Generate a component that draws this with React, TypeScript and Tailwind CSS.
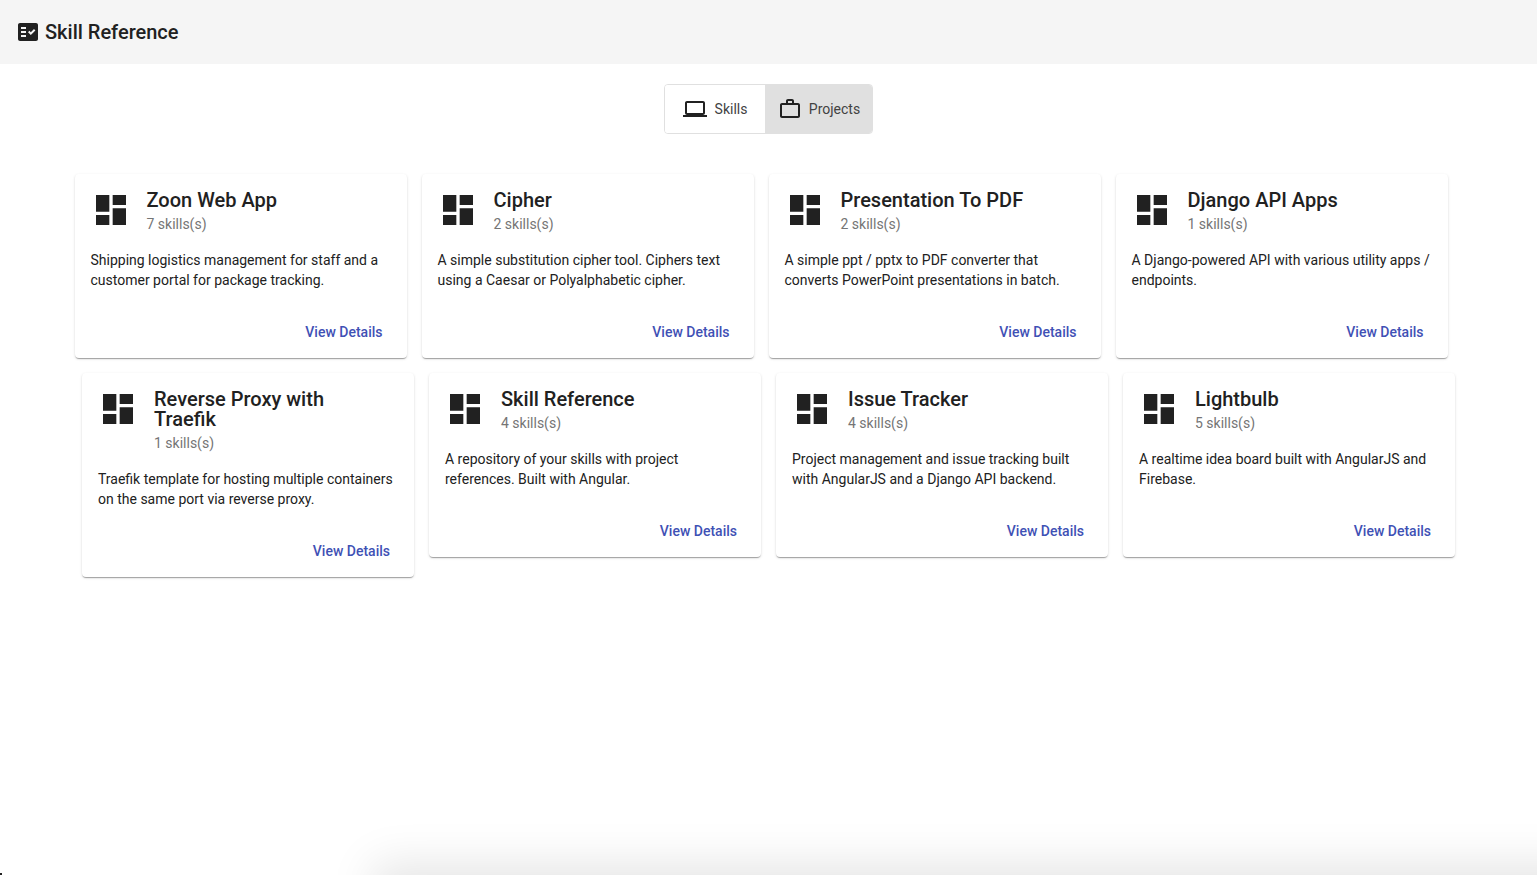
const projects = [
  [
    { name: "Zoon Web App", skills: 7, text: "Shipping logistics management for staff and a customer portal for package tracking." },
    { name: "Cipher", skills: 2, text: "A simple substitution cipher tool. Ciphers text using a Caesar or Polyalphabetic cipher." },
    { name: "Presentation To PDF", skills: 2, text: "A simple ppt / pptx to PDF converter that converts PowerPoint presentations in batch." },
    { name: "Django API Apps", skills: 1, text: "A Django-powered API with various utility apps / endpoints." },
  ],
  [
    { name: "Reverse Proxy with Traefik", skills: 1, text: "Traefik template for hosting multiple containers on the same port via reverse proxy." },
    { name: "Skill Reference", skills: 4, text: "A repository of your skills with project references. Built with Angular." },
    { name: "Issue Tracker", skills: 4, text: "Project management and issue tracking built with AngularJS and a Django API backend." },
    { name: "Lightbulb", skills: 5, text: "A realtime idea board built with AngularJS and Firebase." },
  ],
];

type Project = (typeof projects)[number][number];

function ProjectCard({ project }: { project: Project }) {
  return (
    <div className="w-[332px] shrink-0 rounded bg-white px-4 pt-4 pb-2 shadow-[0_2px_1px_-1px_rgba(0,0,0,0.2),0_1px_1px_0_rgba(0,0,0,0.14),0_1px_3px_0_rgba(0,0,0,0.12)]">
      <div className="flex">
        <svg viewBox="0 0 24 24" className="h-10 w-10 shrink-0 fill-[#212121]">
          <path d="M3 13h8V3H3v10zm0 8h8v-6H3v6zm10 0h8V11h-8v10zm0-18v6h8V3h-8z" />
        </svg>
        <div className="ml-4 min-w-0 flex-1">
          <div className="pr-8 text-[20px] leading-5 font-medium text-[#212121]">{project.name}</div>
          <div className="mt-[4px] text-sm leading-5 text-[#757575]">{project.skills} skills(s)</div>
        </div>
      </div>
      <p className="mt-[16px] text-sm leading-5 text-[#212121]">{project.text}</p>
      <div className="mt-[24px] flex justify-end">
        <button className="px-2 text-sm leading-9 font-medium text-[#3f51b5]">View Details</button>
      </div>
    </div>
  );
}

export default function App() {
  return (
    <div className="relative h-[875px] overflow-hidden bg-white font-['Roboto',sans-serif]">
      <header className="flex h-16 items-center bg-[#f5f5f5] px-4">
        <svg viewBox="0 0 24 24" className="h-6 w-6 fill-[#212121]">
          <path d="M20,3H4C2.9,3,2,3.9,2,5v14c0,1.1,0.9,2,2,2h16c1.1,0,2-0.9,2-2V5C22,3.9,21.1,3,20,3z M10,17H5v-2h5V17z M10,13H5v-2h5V13z M10,9H5V7h5V9z M14.82,15L12,12.16l1.41-1.41l1.41,1.42L17.99,9l1.42,1.42L14.82,15z" />
        </svg>
        <span className="ml-[5px] text-[20px] font-medium text-[#212121]">Skill Reference</span>
      </header>

      <div className="mt-5 flex justify-center">
        <div className="flex h-[50px] overflow-hidden rounded border border-[#e0e0e0] text-sm text-[#424242]">
          <button className="flex w-[101px] items-center justify-center border-r border-[#e0e0e0] bg-white">
            <svg viewBox="0 0 24 24" className="h-6 w-6 fill-[#212121]">
              <path d="M20 18c1.1 0 1.99-.9 1.99-2L22 6c0-1.1-.9-2-2-2H4c-1.1 0-2 .9-2 2v10c0 1.1.9 2 2 2H0v2h24v-2h-4zM4 6h16v10H4V6z" />
            </svg>
            <span className="ml-2">Skills</span>
          </button>
          <button className="flex w-[106px] items-center justify-center bg-[#e0e0e0]">
            <svg viewBox="0 0 24 24" className="h-6 w-6 fill-[#212121]">
              <path d="M14 6V4h-4v2h4zM4 8v11h16V8H4zm16-2c1.11 0 2 .89 2 2v11c0 1.11-.89 2-2 2H4c-1.11 0-2-.89-2-2l.01-11c0-1.11.88-2 1.99-2h4V4c0-1.11.89-2 2-2h4c1.11 0 2 .89 2 2v2h4z" />
            </svg>
            <span className="ml-[7px]">Projects</span>
          </button>
        </div>
      </div>

      <div className="mt-10 flex flex-col gap-[15px]">
        <div className="flex items-start justify-center gap-[15px] pr-[15px]">
          {projects[0].map((project) => (
            <ProjectCard key={project.name} project={project} />
          ))}
        </div>
        <div className="flex items-start justify-center gap-[15px]">
          {projects[1].map((project) => (
            <ProjectCard key={project.name} project={project} />
          ))}
        </div>
      </div>

      {/* soft shadow rising from the bottom edge */}
      <div className="absolute top-[875px] right-[-60px] left-[385px] h-10 shadow-[0_0_45px_12px_rgba(0,0,0,0.1)]" />
      <div className="absolute bottom-0 left-0 h-[2px] w-[2px] bg-[#212121]" />
    </div>
  );
}
